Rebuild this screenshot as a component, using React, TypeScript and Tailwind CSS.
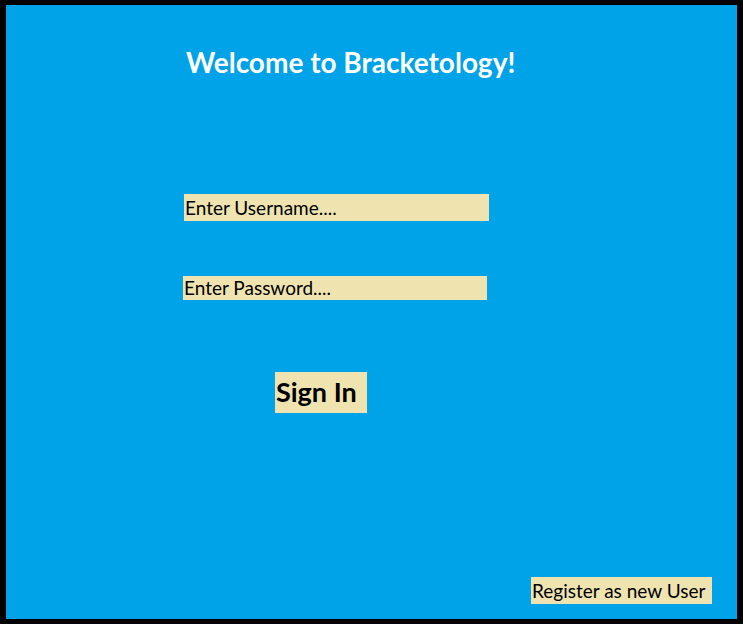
import React from "react";

export default function App() {
  return (
    <div
      className="w-[743px] h-[624px] bg-[#00A2E8] border-black border-x-[6px] border-t-[5px] border-b-[5px] flex flex-col"
      style={{ fontFamily: "Lato, 'Open Sans', sans-serif" }}
    >
      <h1 className="ml-[180px] mt-[40px] h-[34px] leading-[34px] text-[28px] font-bold text-white">
        Welcome to Bracketology!
      </h1>
      <div className="ml-[178px] mt-[115px] w-[305px] h-[27px] bg-[#EFE4B0] pl-[1px] text-[19px] leading-[27px] text-black">
        Enter Username....
      </div>
      <div className="ml-[177px] mt-[55px] w-[304px] h-[24px] bg-[#EFE4B0] pl-[1px] text-[19px] leading-[24px] text-black">
        Enter Password....
      </div>
      <div className="ml-[269px] mt-[72px] w-[92px] h-[41px] bg-[#EFE4B0] pl-[1px] text-[27px] leading-[39px] font-bold text-black">
        Sign In
      </div>
      <div className="mt-auto self-end mr-[25px] mb-[15px] w-[181px] h-[27px] bg-[#EFE4B0] pl-[1px] text-[19px] leading-[27px] text-black">
        Register as new User
      </div>
    </div>
  );
}
